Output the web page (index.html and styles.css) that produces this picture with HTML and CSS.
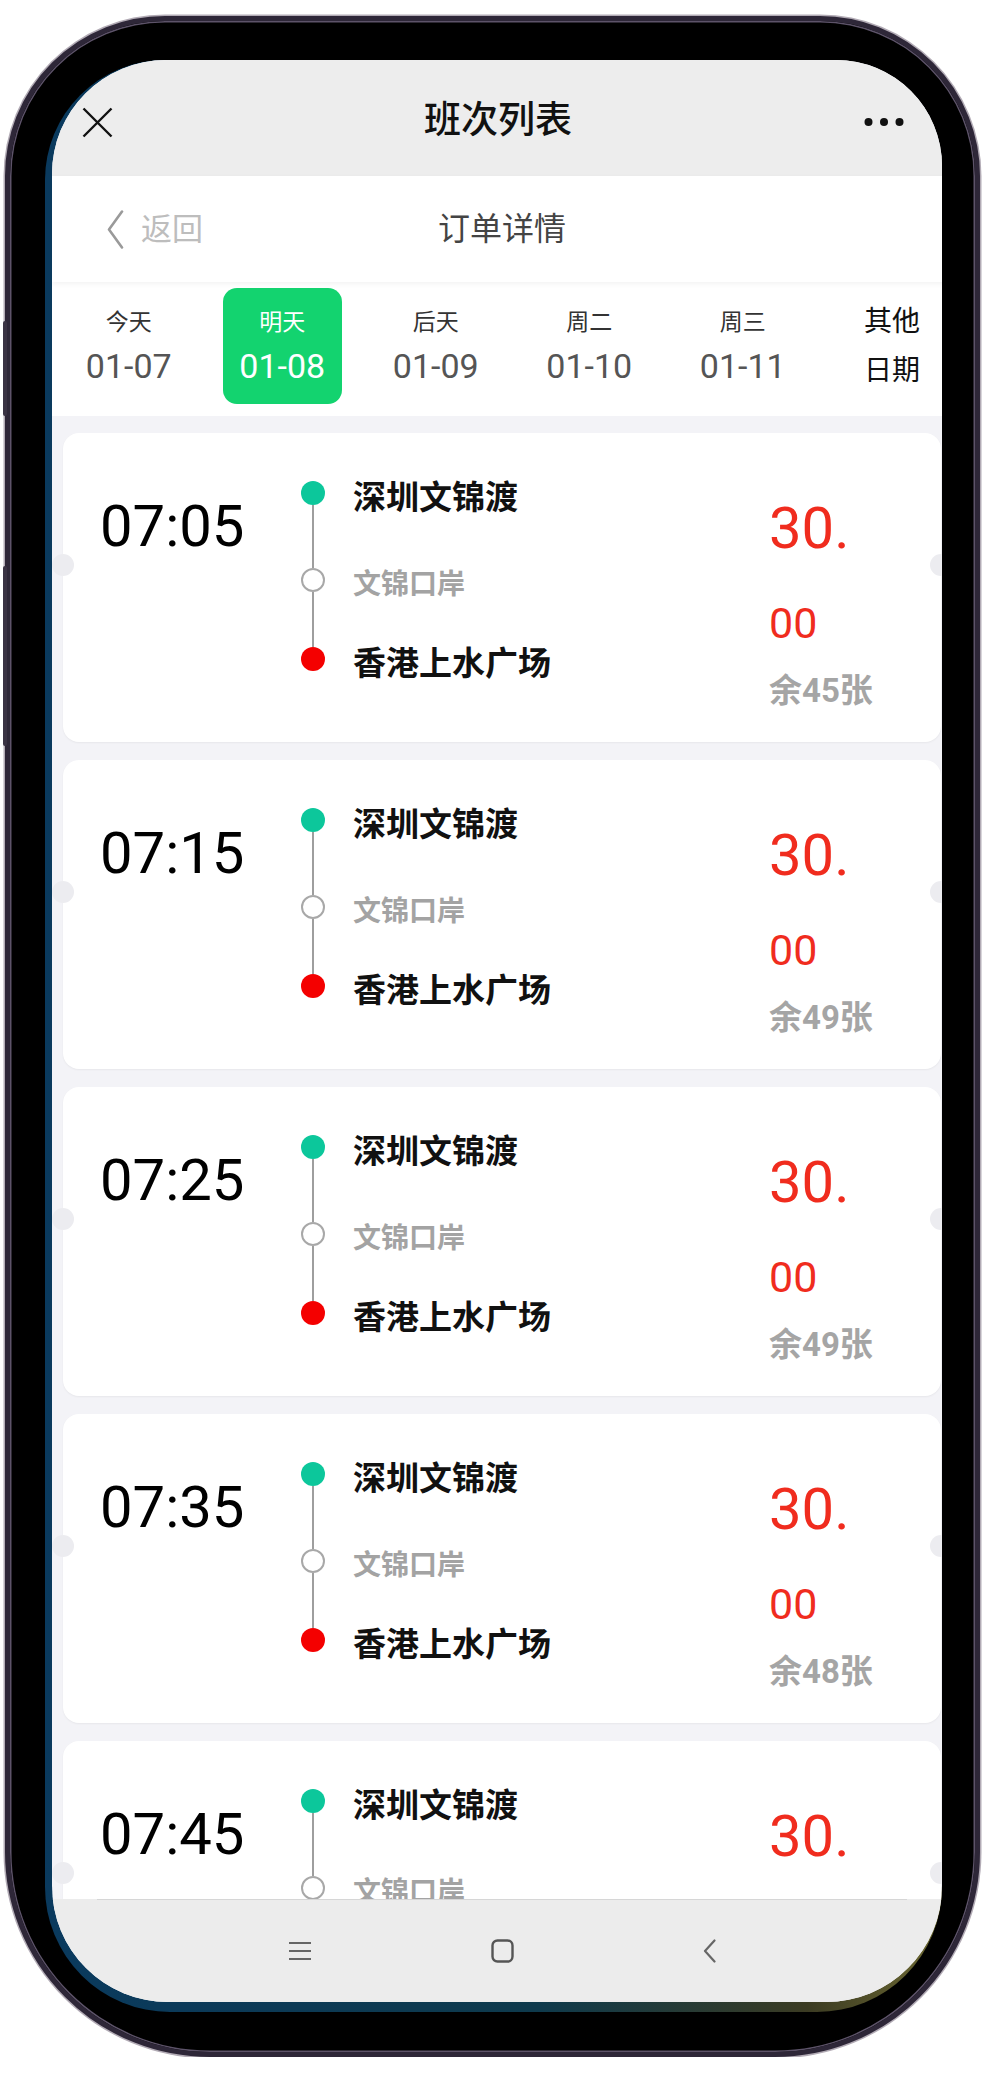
FILE: index.html
```html
<!DOCTYPE html>
<html lang="zh-CN">
<head>
<meta charset="utf-8">
<title>班次列表</title>
<link rel="stylesheet" href="styles.css">
</head>
<body>
<div class="page">
  <div class="phone">
    <div class="wall">
      <div class="screen">
        <div class="inner">
          <header class="topbar">
            <svg class="close" width="31" height="31" viewBox="0 0 31 31"><path d="M1.5 1.5L29.5 29.5M29.5 1.5L1.5 29.5" stroke="#111" stroke-width="2.4" fill="none"/></svg>
            <div class="title">班次列表</div>
            <svg class="more" width="40" height="10" viewBox="0 0 40 10"><circle cx="4.5" cy="5" r="4" fill="#111"/><circle cx="20" cy="5" r="4" fill="#111"/><circle cx="35.5" cy="5" r="4" fill="#111"/></svg>
          </header>
          <nav class="navbar">
            <div class="back">
              <svg width="18" height="39" viewBox="0 0 18 39"><path d="M16 1.5L3 19.5L16 37.5" stroke="#9a9a9a" stroke-width="2.6" fill="none" stroke-linecap="round" stroke-linejoin="round"/></svg>
              <span class="back-text">返回</span>
            </div>
            <div class="nav-title">订单详情</div>
            <div></div>
          </nav>
          <section class="datebar">
            <div class="days">
              <div class="day"><div class="tile"><span class="dw">今天</span><span class="dd">01-07</span></div></div>
              <div class="day"><div class="tile active"><span class="dw">明天</span><span class="dd">01-08</span></div></div>
              <div class="day"><div class="tile"><span class="dw">后天</span><span class="dd">01-09</span></div></div>
              <div class="day"><div class="tile"><span class="dw">周二</span><span class="dd">01-10</span></div></div>
              <div class="day"><div class="tile"><span class="dw">周三</span><span class="dd">01-11</span></div></div>
            </div>
            <div class="other"><span>其他</span><span class="o2">日期</span></div>
          </section>
          <main class="list">
            <div class="card">
              <div class="time">07:05</div>
              <div class="route">
                <div class="stop"><span class="dot start"></span><span class="name">深圳文锦渡</span></div>
                <div class="link l1"></div>
                <div class="stop"><span class="dot via"></span><span class="name via-name">文锦口岸</span></div>
                <div class="link l2"></div>
                <div class="stop"><span class="dot end"></span><span class="name">香港上水广场</span></div>
              </div>
              <div class="price"><span class="p1">30.</span><span class="p2">00</span><span class="left">余45张</span></div>
            </div>
            <div class="card">
              <div class="time">07:15</div>
              <div class="route">
                <div class="stop"><span class="dot start"></span><span class="name">深圳文锦渡</span></div>
                <div class="link l1"></div>
                <div class="stop"><span class="dot via"></span><span class="name via-name">文锦口岸</span></div>
                <div class="link l2"></div>
                <div class="stop"><span class="dot end"></span><span class="name">香港上水广场</span></div>
              </div>
              <div class="price"><span class="p1">30.</span><span class="p2">00</span><span class="left">余49张</span></div>
            </div>
            <div class="card">
              <div class="time">07:25</div>
              <div class="route">
                <div class="stop"><span class="dot start"></span><span class="name">深圳文锦渡</span></div>
                <div class="link l1"></div>
                <div class="stop"><span class="dot via"></span><span class="name via-name">文锦口岸</span></div>
                <div class="link l2"></div>
                <div class="stop"><span class="dot end"></span><span class="name">香港上水广场</span></div>
              </div>
              <div class="price"><span class="p1">30.</span><span class="p2">00</span><span class="left">余49张</span></div>
            </div>
            <div class="card">
              <div class="time">07:35</div>
              <div class="route">
                <div class="stop"><span class="dot start"></span><span class="name">深圳文锦渡</span></div>
                <div class="link l1"></div>
                <div class="stop"><span class="dot via"></span><span class="name via-name">文锦口岸</span></div>
                <div class="link l2"></div>
                <div class="stop"><span class="dot end"></span><span class="name">香港上水广场</span></div>
              </div>
              <div class="price"><span class="p1">30.</span><span class="p2">00</span><span class="left">余48张</span></div>
            </div>
            <div class="card">
              <div class="time">07:45</div>
              <div class="route">
                <div class="stop"><span class="dot start"></span><span class="name">深圳文锦渡</span></div>
                <div class="link l1"></div>
                <div class="stop"><span class="dot via"></span><span class="name via-name">文锦口岸</span></div>
                <div class="link l2"></div>
                <div class="stop"><span class="dot end"></span><span class="name">香港上水广场</span></div>
              </div>
              <div class="price"><span class="p1">30.</span><span class="p2">00</span><span class="left">余50张</span></div>
            </div>
          </main>
          <footer class="sysnav">
            <div class="sysline"></div>
            <div class="sysicons">
              <svg class="ic-menu" width="22" height="20" viewBox="0 0 22 20"><path d="M0 2H22M0 10H22M0 18H22" stroke="#666" stroke-width="2" fill="none"/></svg>
              <svg class="ic-home" width="23" height="24" viewBox="0 0 23 24"><rect x="1.5" y="1.5" width="20" height="21" rx="5" stroke="#555" stroke-width="2.4" fill="none"/></svg>
              <svg class="ic-back" width="13" height="24" viewBox="0 0 13 24"><path d="M11.5 1.5L2 12L11.5 22.5" stroke="#666" stroke-width="2.2" fill="none" stroke-linecap="round" stroke-linejoin="round"/></svg>
            </div>
          </footer>
        </div>
      </div>
    </div>
    <span class="sidebtn b1"></span>
    <span class="sidebtn b2"></span>
  </div>
</div>
</body>
</html>
```

FILE: styles.css
```css
* { box-sizing: border-box; margin: 0; padding: 0; }

body {
  background: #ffffff;
  font-family: Roboto, "Noto Sans CJK SC", sans-serif;
  color: #111;
}

.page {
  padding: 16px 0 0 5px;
}

.phone {
  position: relative;
  width: 975px;
  height: 2041px;
  border-radius: 160px 160px 205px 205px;
  background: #000;
  border: 5px solid #2e2738;
  box-shadow: 0 0 0 1.5px #b2abb5, inset 0 0 0 1.5px #5d5369;
  padding: 39px 33px 40px 35px;
}

.sidebtn {
  position: absolute;
  left: -7px;
  width: 4px;
  background: #3a3344;
  border-radius: 2px;
}
.b1 { top: 300px; height: 95px; }
.b2 { top: 545px; height: 180px; }

.wall {
  height: 100%;
  border-radius: 120px 112px 125px 125px;
  background: linear-gradient(90deg, #0a3a5e 0%, #0e3a4c 55%, #3b3b22 85%, #6c6832 100%);
  padding: 0 0 10px 7px;
}

.screen {
  width: 890px;
  height: 1942px;
  border-radius: 114px 106px 116px 116px;
  overflow: hidden;
  background: #f3f3f7;
}

.inner {
  width: 900px;
  height: 100%;
  display: flex;
  flex-direction: column;
}

/* top bar */
.topbar {
  flex: none;
  height: 116px;
  background: #ededed;
  display: grid;
  grid-template-columns: 1fr auto 1fr;
  align-items: start;
  padding: 0 38px 0 30px;
}
.close { margin-top: 47px; }
.title {
  margin-top: 42px;
  font-size: 37px;
  line-height: 1;
  font-weight: 500;
  color: #111;
}
.more {
  justify-self: end;
  margin-top: 57px;
  margin-right: 10px;
}

/* nav bar */
.navbar {
  flex: none;
  height: 106px;
  background: #fff;
  display: grid;
  grid-template-columns: 1fr auto 1fr;
  align-items: center;
  padding: 0 54px;
  position: relative;
  z-index: 1;
  box-shadow: 0 2px 5px rgba(0, 0, 0, 0.05);
}
.back {
  display: flex;
  align-items: center;
}
.back-text {
  margin-left: 17px;
  font-size: 31px;
  line-height: 1;
  color: #bdbdbd;
}
.nav-title {
  font-size: 32px;
  line-height: 1;
  color: #444;
}

/* date bar */
.datebar {
  flex: none;
  height: 134px;
  background: #fff;
  display: flex;
}
.days {
  width: 790px;
  display: flex;
  overflow: hidden;
}
.day {
  flex: none;
  width: 153.5px;
  display: flex;
  justify-content: center;
  padding-top: 6px;
}
.tile {
  width: 119px;
  height: 116px;
  border-radius: 14px;
  display: flex;
  flex-direction: column;
  align-items: center;
  padding-top: 23px;
}
.dw {
  font-size: 23px;
  line-height: 1;
  color: #333;
}
.dd {
  margin-top: 15px;
  font-size: 34px;
  line-height: 1;
  color: #555;
}
.tile.active { background: #13d36f; }
.tile.active .dw,
.tile.active .dd { color: #fff; }

.other {
  width: 100px;
  display: flex;
  flex-direction: column;
  align-items: center;
  padding-top: 26px;
  font-size: 28px;
  line-height: 1;
  color: #111;
}
.o2 { margin-top: 21px; }

/* list */
.list {
  flex: 1;
  min-height: 0;
  overflow: hidden;
  display: flex;
  flex-direction: column;
  gap: 18px;
  padding-top: 17px;
}

.card {
  flex: none;
  position: relative;
  height: 309px;
  margin: 0 11px;
  background: #fff;
  border-radius: 16px;
  box-shadow: 0 1px 2px rgba(0, 0, 0, 0.05);
  display: flex;
  padding-left: 37px;
}
.card::before,
.card::after {
  content: "";
  position: absolute;
  top: 121px;
  width: 22px;
  height: 22px;
  border-radius: 50%;
  background: #ececf0;
}
.card::before { left: -11px; }
.card::after { right: -11px; }

.time {
  width: 201px;
  padding-top: 64px;
  font-size: 58px;
  line-height: 1;
  color: #000;
}

.route {
  width: 468px;
  padding-top: 48px;
}
.stop {
  height: 24px;
  display: flex;
  align-items: center;
}
.dot {
  flex: none;
  width: 24px;
  height: 24px;
  border-radius: 50%;
}
.dot.start { background: #0cc79b; }
.dot.end { background: #f40000; }
.dot.via { background: #fff; border: 2px solid #a8a8a8; }
.name {
  margin-left: 28px;
  margin-top: 10px;
  font-size: 33px;
  line-height: 24px;
  font-weight: 700;
  color: #111;
  white-space: nowrap;
}
.name.via-name {
  font-size: 28px;
  color: #a3a3a3;
}
.link {
  width: 2px;
  margin-left: 11px;
  background: #9e9e9e;
}
.l1 { height: 63px; }
.l2 { height: 55px; }

.price {
  display: flex;
  flex-direction: column;
  align-items: flex-start;
  padding-top: 66px;
  color: #f02c1e;
}
.p1 { font-size: 58px; line-height: 1; }
.p2 { margin-top: 45px; font-size: 43px; line-height: 1; }
.left {
  margin-top: 29px;
  font-size: 33px;
  line-height: 1;
  font-weight: 700;
  color: #a5a5a5;
}

/* system nav */
.sysnav {
  flex: none;
  height: 103px;
  background: #ececec;
  display: flex;
  flex-direction: column;
}
.sysline {
  height: 1px;
  margin: 0 45px;
  background: #d6d6d6;
}
.sysicons {
  flex: 1;
  display: flex;
  align-items: center;
  padding-left: 237px;
}
.ic-home { margin-left: 180px; }
.ic-back { margin-left: 189px; }
```
